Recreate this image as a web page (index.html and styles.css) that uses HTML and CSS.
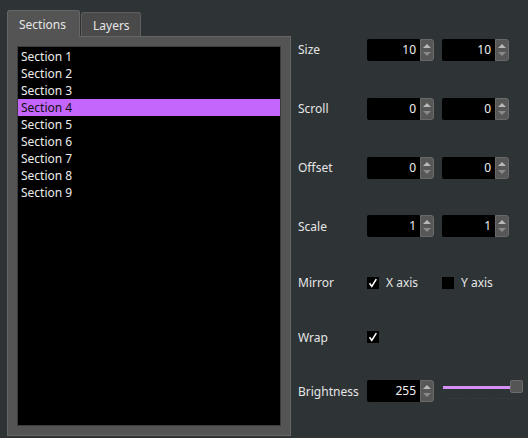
FILE: index.html
```html
<!DOCTYPE html>
<html>
<head>
<meta charset="utf-8">
<link rel="stylesheet" href="styles.css">
</head>
<body>
<div class="app">
  <div class="tabwidget">
    <div class="tabbar">
      <div class="tab active">Sections</div>
      <div class="tab">Layers</div>
    </div>
    <div class="panel">
      <ul class="list">
        <li>Section 1</li>
        <li>Section 2</li>
        <li>Section 3</li>
        <li class="sel">Section 4</li>
        <li>Section 5</li>
        <li>Section 6</li>
        <li>Section 7</li>
        <li>Section 8</li>
        <li>Section 9</li>
      </ul>
    </div>
  </div>
  <div class="form">
    <div class="label">Size</div>
    <div class="controls">
      <div class="spin"><div class="field">10</div><div class="btns"><span class="up"></span><span class="down"></span></div></div>
      <div class="spin"><div class="field">10</div><div class="btns"><span class="up"></span><span class="down"></span></div></div>
    </div>
    <div class="label">Scroll</div>
    <div class="controls">
      <div class="spin"><div class="field">0</div><div class="btns"><span class="up"></span><span class="down"></span></div></div>
      <div class="spin"><div class="field">0</div><div class="btns"><span class="up"></span><span class="down"></span></div></div>
    </div>
    <div class="label">Offset</div>
    <div class="controls">
      <div class="spin"><div class="field">0</div><div class="btns"><span class="up"></span><span class="down"></span></div></div>
      <div class="spin"><div class="field">0</div><div class="btns"><span class="up"></span><span class="down"></span></div></div>
    </div>
    <div class="label">Scale</div>
    <div class="controls">
      <div class="spin"><div class="field">1</div><div class="btns"><span class="up"></span><span class="down"></span></div></div>
      <div class="spin"><div class="field">1</div><div class="btns"><span class="up"></span><span class="down"></span></div></div>
    </div>
    <div class="label">Mirror</div>
    <div class="controls">
      <label class="check"><span class="box"><svg width="12" height="12" viewBox="0 0 12 12"><polyline points="2.5,6.2 4.8,9.4 9.3,2.2" fill="none" stroke="#fff" stroke-width="1.6"/></svg></span>X axis</label>
      <label class="check"><span class="box"></span>Y axis</label>
    </div>
    <div class="label">Wrap</div>
    <div class="controls">
      <label class="check"><span class="box"><svg width="12" height="12" viewBox="0 0 12 12"><polyline points="2.5,6.2 4.8,9.4 9.3,2.2" fill="none" stroke="#fff" stroke-width="1.6"/></svg></span></label>
    </div>
    <div class="label">Brightness</div>
    <div class="controls">
      <div class="spin"><div class="field">255</div><div class="btns"><span class="up"></span><span class="down"></span></div></div>
      <div class="slider">
        <div class="track"><div class="handle"></div></div>
        <div class="ticks"></div>
      </div>
    </div>
  </div>
</div>
</body>
</html>
```

FILE: styles.css
```css
html, body {
  margin: 0;
  padding: 0;
  background: #2e3336;
  width: 528px;
  height: 438px;
  overflow: hidden;
  font-family: "Noto Sans", "Open Sans", sans-serif;
  font-size: 12px;
  color: #e6e6e6;
}
.app {
  display: flex;
  padding: 10px 0 0 7px;
}
.tabwidget {
  width: 284px;
  display: flex;
  flex-direction: column;
}
.tabbar {
  display: flex;
  align-items: flex-end;
  height: 26px;
  position: relative;
  z-index: 1;
}
.tab {
  box-sizing: border-box;
  height: 24px;
  padding: 0 11px;
  line-height: 25px;
  background: #4a4a4a;
  border: 1px solid #5e5e5e;
  border-bottom: none;
  border-radius: 3px 3px 0 0;
  margin-left: 1px;
  width: 60px;
}
.tab.active {
  height: 27px;
  margin-bottom: -1px;
  background: #545454;
  border-color: #666;
  width: 73px;
  margin-left: 0;
  line-height: 27px;
}
.panel {
  box-sizing: border-box;
  height: 400px;
  background: #545454;
  border: 1px solid #666;
  padding: 9px;
}
.list {
  list-style: none;
  margin: 0;
  padding: 1px 0 0 0;
  box-sizing: border-box;
  height: 380px;
  background: #000;
  border: 1px solid #3c3c3c;
}
.list li {
  height: 17px;
  line-height: 17px;
  padding-left: 3px;
  color: #ececec;
}
.list li.sel {
  background: #c466fc;
  color: #101010;
}
.form {
  margin-left: 7px;
  margin-top: 10px;
  display: grid;
  grid-template-columns: 69px auto;
  grid-template-rows: 59px 59px 59px 58px 55px 54px 54px;
  align-items: center;
}
.label {
  color: #e6e6e6;
}
.controls {
  display: flex;
  align-items: center;
  gap: 8px;
}
.spin {
  display: flex;
  width: 67px;
  height: 22px;
}
.field {
  flex: 1;
  background: #000;
  border-radius: 2px 0 0 2px;
  text-align: right;
  padding-right: 4px;
  line-height: 22px;
  color: #f0f0f0;
}
.btns {
  box-sizing: border-box;
  width: 14px;
  height: 22px;
  background: #575757;
  border: 1px solid #6a6a6a;
  border-radius: 0 3px 3px 0;
  display: flex;
  flex-direction: column;
  align-items: center;
  justify-content: space-between;
  padding: 4px 0 4px;
}
.up {
  width: 0;
  height: 0;
  border-left: 4px solid transparent;
  border-right: 4px solid transparent;
  border-bottom: 4px solid #b8b8b8;
}
.down {
  width: 0;
  height: 0;
  border-left: 4px solid transparent;
  border-right: 4px solid transparent;
  border-top: 4px solid #8a8a8a;
}
.check {
  display: flex;
  align-items: center;
  gap: 7px;
  width: 67px;
}
.box {
  width: 12px;
  height: 12px;
  background: #000;
  display: block;
}
.box svg {
  display: block;
}
.slider {
  width: 81px;
  height: 26px;
  margin-left: 1px;
  display: flex;
  flex-direction: column;
  padding-top: 0;
}
.track {
  position: relative;
  margin-top: 8px;
  width: 68px;
  height: 3px;
  background: #d590f5;
}
.handle {
  position: absolute;
  left: 67px;
  top: -6px;
  box-sizing: border-box;
  width: 13px;
  height: 13px;
  background: #555;
  border: 1px solid #6b6b6b;
  border-radius: 2px;
}
.ticks {
  margin-top: 9px;
  margin-left: 5px;
  width: 70px;
  height: 1px;
  background: repeating-linear-gradient(90deg, #3c4144 0 1px, transparent 1px 3px);
}
```
